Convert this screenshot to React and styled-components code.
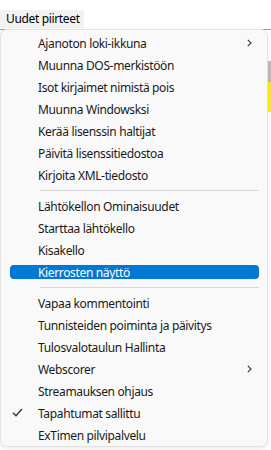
import React from "react";
import styled, { createGlobalStyle } from "styled-components";

const Global = createGlobalStyle`
  html, body { margin: 0; padding: 0; background: #ffffff; }
  body { font-family: "Noto Sans", "Open Sans", sans-serif; }
  #root { width: 271px; height: 450px; }
`;

const Window = styled.div`
  position: relative;
  width: 271px;
  height: 450px;
  display: flex;
  flex-direction: column;
  overflow: hidden;
  background: #ffffff;
`;

const MenuBar = styled.div`
  height: 30px;
  display: flex;
  align-items: flex-start;
  padding-top: 10px;
  box-sizing: border-box;
  border-bottom: 1px solid #a0a0a0;
`;

const MenuTitle = styled.div`
  height: 18px;
  padding: 0 6px;
  width: 72px;
  background: #f2f2f2;
  font-size: 12px;
  letter-spacing: -0.35px;
  line-height: 18px;
  color: #000;
  white-space: nowrap;
`;

const Content = styled.div`
  flex: 1;
  display: flex;
  justify-content: flex-end;
`;

const ScrollTrack = styled.div`
  width: 3px;
  display: flex;
  flex-direction: column;
  padding-top: 31px;
`;

const ScrollThumb = styled.div`
  height: ${p => p.$h}px;
  background: ${p => p.$c};
`;

const Dropdown = styled.div`
  position: absolute;
  top: 29px;
  left: 0;
  width: 268px;
  box-sizing: border-box;
  padding: 2px 0 0;
  background: #f9f9f9;
  border: 1px solid #e3e3e3;
  border-radius: 7px;
  box-shadow: 0 2px 4px rgba(0,0,0,0.08);
  display: flex;
  flex-direction: column;
`;

const Item = styled.div`
  position: relative;
  height: 22px;
  display: flex;
  align-items: center;
  padding-left: 37px;
  font-size: 12px;
  letter-spacing: -0.35px;
  color: ${p => (p.$active ? "#ffffff" : "#1a1a1a")};
  white-space: nowrap;
  &::before {
    content: "";
    position: absolute;
    left: 9px;
    right: 8px;
    top: 4px;
    bottom: 4px;
    border-radius: 4px;
    background: ${p => (p.$active ? "#0078d4" : "transparent")};
    z-index: 0;
  }
`;

const Label = styled.span`
  position: relative;
  z-index: 1;
`;

const Chevron = styled.svg`
  position: absolute;
  right: 15px;
  top: 7px;
  width: 5px;
  height: 8px;
`;

const Check = styled.svg`
  position: absolute;
  left: 11px;
  top: 6px;
  width: 11px;
  height: 9px;
`;

const Separator = styled.div`
  height: 9px;
  display: flex;
  align-items: center;
  padding: 0 8px 0 39px;
  &::after {
    content: "";
    flex: 1;
    height: 1px;
    background: #d8d8d8;
  }
`;

const groups = [
  [
    { t: "Ajanoton loki-ikkuna", sub: true },
    { t: "Muunna DOS-merkistöön" },
    { t: "Isot kirjaimet nimistä pois" },
    { t: "Muunna Windowsksi" },
    { t: "Kerää lisenssin haltijat" },
    { t: "Päivitä lisenssitiedostoa" },
    { t: "Kirjoita XML-tiedosto" },
  ],
  [
    { t: "Lähtökellon Ominaisuudet" },
    { t: "Starttaa lähtökello" },
    { t: "Kisakello" },
    { t: "Kierrosten näyttö", active: true },
  ],
  [
    { t: "Vapaa kommentointi" },
    { t: "Tunnisteiden poiminta ja päivitys" },
    { t: "Tulosvalotaulun Hallinta" },
    { t: "Webscorer", sub: true },
    { t: "Streamauksen ohjaus" },
    { t: "Tapahtumat sallittu", checked: true },
    { t: "ExTimen pilvipalvelu" },
  ],
];

export default function App() {
  return (
    <>
      <Global />
      <Window>
        <MenuBar>
          <MenuTitle>Uudet piirteet</MenuTitle>
        </MenuBar>
        <Content>
          <ScrollTrack>
            <ScrollThumb $h={21} $c="#bdbdbd" />
            <ScrollThumb $h={30} $c="#ffee00" />
          </ScrollTrack>
        </Content>
        <Dropdown>
          {groups.map((g, gi) => (
            <React.Fragment key={gi}>
              {gi > 0 && <Separator />}
              {g.map(it => (
                <Item key={it.t} $active={it.active}>
                  {it.checked && (
                    <Check viewBox="0 0 11 9">
                      <path d="M1 4.8 L4 7.8 L10 1" fill="none" stroke="#333" strokeWidth="1.3" />
                    </Check>
                  )}
                  <Label>{it.t}</Label>
                  {it.sub && (
                    <Chevron viewBox="0 0 5 8">
                      <path d="M0.8 0.8 L4 4 L0.8 7.2" fill="none" stroke="#333" strokeWidth="1.1" />
                    </Chevron>
                  )}
                </Item>
              ))}
            </React.Fragment>
          ))}
        </Dropdown>
      </Window>
    </>
  );
}
